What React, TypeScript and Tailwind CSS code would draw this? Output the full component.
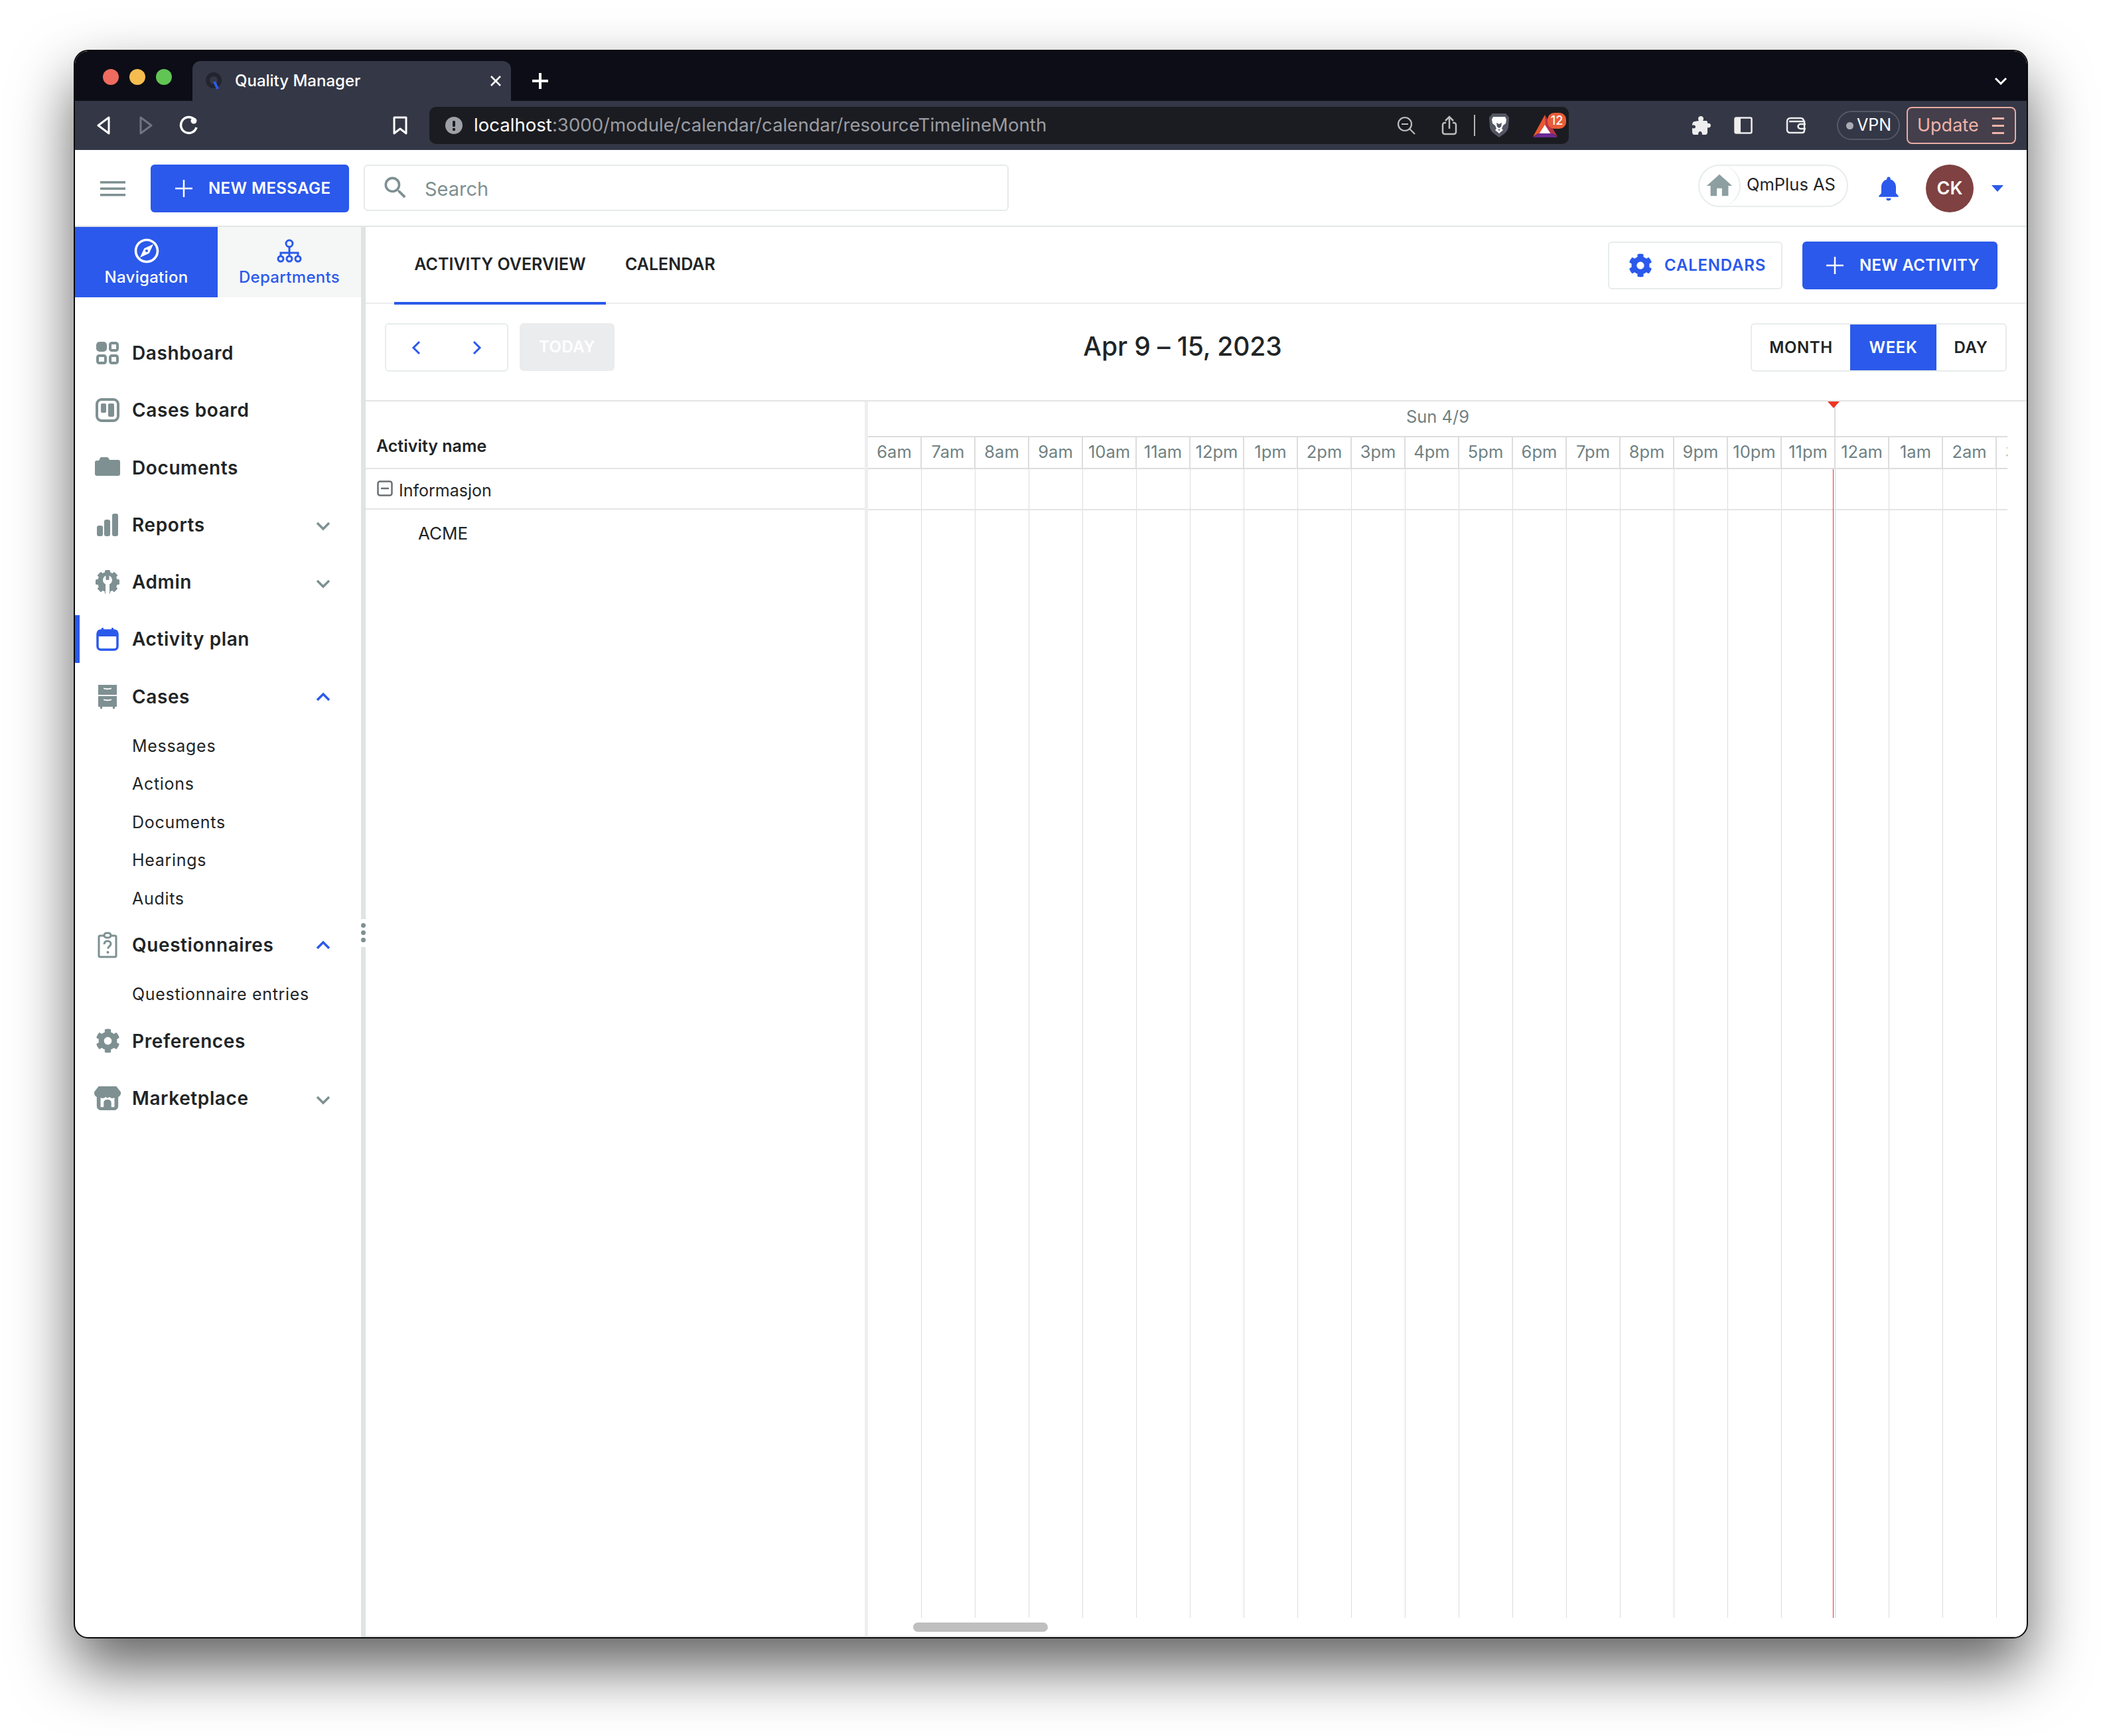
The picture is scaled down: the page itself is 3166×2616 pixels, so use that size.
import { ReactNode } from 'react';
import { FaCog } from 'react-icons/fa';
import { MdHome, MdNotifications, MdOutlineExplore, MdSearch } from 'react-icons/md';

const hours = ['6am', '7am', '8am', '9am', '10am', '11am', '12pm', '1pm', '2pm', '3pm', '4pm', '5pm', '6pm', '7pm', '8pm', '9pm', '10pm', '11pm', '12am', '1am', '2am', '3am'];

const Chevron = ({ up }: { up?: boolean }) => (
  <svg width="22" height="14" viewBox="0 0 22 14" fill="none" className={up ? 'text-[#2b59eb]' : 'text-[#7e9092] mt-[5px]'}>
    <path d={up ? 'M2 12l9-9 9 9' : 'M2 2l9 9 9-9'} stroke="currentColor" strokeWidth="3.500" />
  </svg>
);

const DashIcon = () => (
  <svg width="34" height="34" viewBox="0 0 34 34" fill="none" stroke="#7e9092" strokeWidth="4">
    <rect x="2" y="2" width="12" height="11" rx="3" fill="#7e9092" />
    <rect x="21" y="2" width="11" height="11" rx="2.500" />
    <rect x="2" y="21" width="12" height="11" rx="2.500" />
    <rect x="21" y="21" width="11" height="11" rx="2.500" />
  </svg>
);

const BoardIcon = () => (
  <svg width="36" height="36" viewBox="0 0 36 36" fill="none">
    <rect x="2" y="2" width="32" height="32" rx="7" stroke="#7e9092" strokeWidth="4" />
    <rect x="8" y="8" width="8" height="14" rx="2" fill="#7e9092" />
    <rect x="19" y="8" width="9" height="20" rx="2" fill="#7e9092" />
  </svg>
);

const FolderIcon = () => (
  <svg width="38" height="32" viewBox="0 0 38 32" fill="#7e9092">
    <path d="M0 8c0-2 1-3 3-3h3l2-4c.4-.7 1-1 2-1h8c1.500 0 2.500.7 3 2l1 2h13c2 0 3 1 3 3v18c0 2-1 3-3 3H3c-2 0-3-1-3-3z" />
  </svg>
);

const BarsIcon = () => (
  <svg width="32" height="34" viewBox="0 0 32 34" fill="#7e9092">
    <rect x="0" y="18" width="9" height="16" rx="3" />
    <rect x="11" y="9" width="9" height="25" rx="3" />
    <rect x="23" y="0" width="9" height="34" rx="3" />
  </svg>
);

const AdminIcon = () => (
  <svg width="38" height="36" viewBox="0 0 38 36" fill="#7e9092">
    <circle cx="19" cy="18" r="15" />
    {[0, 45, 90, 135, 180, 225, 270, 315].map((a) => (
      <rect key={a} x="15" y="0" width="8" height="8" rx="1.500" transform={`rotate(${a} 19 18)`} />
    ))}
    <circle cx="19" cy="15" r="7" fill="#fff" />
    <rect x="16.500" y="6" width="5" height="9" rx="1" />
    <rect x="16" y="19" width="6" height="17" fill="#fff" />
  </svg>
);

const CalIcon = () => (
  <svg width="34" height="36" viewBox="0 0 34 36" fill="none">
    <rect x="2" y="5" width="30" height="29" rx="5" stroke="#2b59eb" strokeWidth="3.500" />
    <rect x="2" y="5" width="30" height="9" fill="#2b59eb" />
    <rect x="8" y="1" width="3" height="6" rx="1" fill="#2b59eb" />
    <rect x="23" y="1" width="3" height="6" rx="1" fill="#2b59eb" />
  </svg>
);

const CabinetIcon = () => (
  <svg width="30" height="36" viewBox="0 0 30 36" fill="#7e9092">
    <path d="M1 0h28v15H1zM9 6c3 1.500 9 1.500 12 0v-1.500c-3 1-9 1-12 0z" fillRule="evenodd" />
    <path d="M1 17h28v16h-3v3h-3v-3H7v3H4v-3H1zM9 23c3 1.500 9 1.500 12 0v-1.500c-3 1-9 1-12 0z" fillRule="evenodd" />
  </svg>
);

const ClipIcon = () => (
  <svg width="30" height="40" viewBox="0 0 30 40" fill="none">
    <rect x="2" y="6" width="26" height="32" rx="2" stroke="#7e9092" strokeWidth="3" />
    <rect x="10" y="2" width="10" height="7" rx="3.500" stroke="#7e9092" strokeWidth="3" fill="#fff" />
    <path d="M10 19c0-3 2-5 5-5s5 2 5 4.500c0 3-4 3.500-4.500 7" stroke="#7e9092" strokeWidth="3" />
    <circle cx="15.500" cy="31" r="2" fill="#7e9092" />
  </svg>
);

const StoreIcon = () => (
  <svg width="42" height="38" viewBox="0 0 42 38" fill="#7e9092">
    <path d="M7 0h28l7 9v2c0 3-2 5-4 6H4c-2-1-4-3-4-6V9z" />
    <path d="M4 14h34v17c0 4-3 7-7 7H11c-4 0-7-3-7-7z" />
    <path d="M10 18c3 2 6 1 8-1 2 2 4 2 6 0 2 2 5 3 8 1v15h-5v-7c0-3-2-5-6-5s-6 2-6 5v7h-5z" fill="#fff" />
  </svg>
);

type NavItem = { label: string; icon: ReactNode; chevron?: 'up' | 'down'; active?: boolean; subs?: string[] };

const nav: NavItem[] = [
  { label: 'Dashboard', icon: <DashIcon /> },
  { label: 'Cases board', icon: <BoardIcon /> },
  { label: 'Documents', icon: <FolderIcon /> },
  { label: 'Reports', icon: <BarsIcon />, chevron: 'down' },
  { label: 'Admin', icon: <AdminIcon />, chevron: 'down' },
  { label: 'Activity plan', icon: <CalIcon />, active: true },
  { label: 'Cases', icon: <CabinetIcon />, chevron: 'up', subs: ['Messages', 'Actions', 'Documents', 'Hearings', 'Audits'] },
  { label: 'Questionnaires', icon: <ClipIcon />, chevron: 'up', subs: ['Questionnaire entries'] },
  { label: 'Preferences', icon: <FaCog size={37} color="#7e9092" /> },
  { label: 'Marketplace', icon: <StoreIcon />, chevron: 'down' },
];

function BrowserChrome() {
  return (
    <>
      {/* Tab strip */}
      <div className="h-[75px] bg-[#0c0d16] flex items-end shrink-0">
        <div className="flex items-center gap-[16px] pl-[42px] w-[177px] h-full pt-[2px]">
          <div className="w-[24px] h-[24px] rounded-full bg-[#ef6a5f] shrink-0" />
          <div className="w-[24px] h-[24px] rounded-full bg-[#f5bd4f] shrink-0" />
          <div className="w-[24px] h-[24px] rounded-full bg-[#61c554] shrink-0" />
        </div>
        <div className="w-[480px] h-[60px] bg-[#343746] rounded-t-[12px] flex items-center pl-[20px] pr-[14px]">
          <svg width="24" height="26" viewBox="0 0 24 26" fill="none">
            <circle cx="12" cy="12" r="9" stroke="#22242e" strokeWidth="6" />
            <path d="M13 14l5 11" stroke="#2b59eb" strokeWidth="4" />
          </svg>
          <span className="ml-[20px] text-[24px] font-medium text-white">Quality Manager</span>
          <svg width="18" height="18" viewBox="0 0 18 18" className="ml-auto" stroke="#fff" strokeWidth="2.500">
            <path d="M2 2l14 14M16 2L2 16" />
          </svg>
        </div>
        <svg width="26" height="26" viewBox="0 0 26 26" className="ml-[31px] mb-[17px]" stroke="#fff" strokeWidth="4">
          <path d="M13 1v24M1 13h24" />
        </svg>
        <svg width="20" height="12" viewBox="0 0 20 12" fill="none" stroke="#fff" strokeWidth="3" className="ml-auto mr-[29px] mb-[24px]">
          <path d="M2 2l8 8 8-8" />
        </svg>
      </div>
      {/* Toolbar */}
      <div className="h-[74px] bg-[#343746] flex items-center shrink-0">
        <svg width="22" height="28" viewBox="0 0 22 28" fill="none" stroke="#fff" strokeWidth="3" className="ml-[32px]">
          <path d="M19 2L3 14l16 12z" strokeLinejoin="round" />
        </svg>
        <svg width="22" height="28" viewBox="0 0 22 28" fill="none" stroke="#71747f" strokeWidth="3" className="ml-[42px]">
          <path d="M3 2l16 12L3 26z" strokeLinejoin="round" />
        </svg>
        <svg width="30" height="30" viewBox="0 0 30 30" fill="none" className="ml-[39px]">
          <path d="M23 6a12 12 0 1 0 3 12" stroke="#fff" strokeWidth="3.500" />
          <circle cx="22" cy="8" r="4.500" fill="#fff" />
        </svg>
        <svg width="22" height="28" viewBox="0 0 22 28" fill="none" stroke="#fff" strokeWidth="3" className="ml-[292px]">
          <path d="M2 2h18v24l-9-7-9 7z" strokeLinejoin="round" />
        </svg>
        <div className="ml-[33px] w-[1717px] h-[56px] bg-[#1b1c21] rounded-[10px] flex items-center pl-[24px] pr-[17px]">
          <svg width="26" height="26" viewBox="0 0 26 26">
            <circle cx="13" cy="13" r="13" fill="#9da0a6" />
            <rect x="11" y="6" width="4" height="9" rx="1.500" fill="#1b1c21" />
            <circle cx="13" cy="19" r="2.200" fill="#1b1c21" />
          </svg>
          <span className="ml-[17px] text-[27.600px] text-[#9a9ca3]">
            <span className="text-white">localhost</span>:3000/module/calendar/calendar/resourceTimelineMonth
          </span>
          <div className="ml-auto flex items-center">
            {/* Zoom out */}
            <svg width="28" height="28" viewBox="0 0 28 28" fill="none" stroke="#bdbdbd" strokeWidth="2.200">
              <circle cx="12" cy="12" r="10" />
              <path d="M7 12h10" />
              <path d="M19 19l8 8" />
            </svg>
            {/* Share */}
            <svg width="24" height="30" viewBox="0 0 24 30" fill="none" stroke="#bdbdbd" strokeWidth="2.500" className="ml-[39px]">
              <path d="M7 11H5a3 3 0 0 0-3 3v11a3 3 0 0 0 3 3h14a3 3 0 0 0 3-3V14a3 3 0 0 0-3-3h-2" />
              <path d="M12 20V2M6 8l6-6 6 6" />
            </svg>
            <div className="ml-[25px] w-[2px] h-[32px] bg-[#b5b5b5]" />
            {/* Brave */}
            <svg width="32" height="36" viewBox="0 0 32 36" className="ml-[20px]">
              <path d="M6 0h20l5 6-1 15c-1 4-3 7-7 10l-7 5-7-5c-4-3-6-6-7-10L1 6z" fill="#545663" />
              <path d="M7 5h18l2 4-1 6-4 3-2 5 2 2-6 5-6-5 2-2-2-5-4-3-1-6z" fill="#fff" />
              <path d="M12 14l4 2 4-2-1 6-3 2-3-2zM14 24h4l-2 2z" fill="#545663" />
            </svg>
            {/* BAT rewards */}
            <div className="relative ml-[35px] w-[37px] h-[34px] mb-[-1px]">
              <svg width="37" height="34" viewBox="0 0 37 34">
                <path d="M18 0L0 33l8-5h14z" fill="#e9572e" />
                <path d="M18 0l19 33-8-5H20z" fill="#b8324a" />
                <path d="M18 15l9 14H9z" fill="#fff" />
                <path d="M0 34l8-6h21l8 6z" fill="#6c2b94" />
              </svg>
              <div className="absolute left-[22px] top-[-3px] w-[28px] h-[24px] rounded-[10px] bg-[#ea5c38] text-[18px] font-medium text-white flex items-center justify-center">12</div>
            </div>
          </div>
        </div>
        {/* Extensions */}
        <svg width="30" height="30" viewBox="0 0 30 30" fill="#eeeeee" className="ml-[185px]">
          <path d="M11 8c-2-3-1-7 3-7s5 4 3 7h5c2 0 2 2 2 4 2-1 5 0 5 3s-3 4-5 3v7c0 2-1 4-3 4h-5c0-3-1-5-3-5s-3 2-3 5H4c-2 0-3-2-3-4v-6c3 1 5 0 5-2s-2-3-5-2c0-3 1-6 4-6z" />
        </svg>
        <svg width="28" height="26" viewBox="0 0 28 26" fill="none" className="ml-[34px]">
          <rect x="1.500" y="1.500" width="25" height="23" rx="2" stroke="#eeeeee" strokeWidth="2.500" />
          <rect x="2" y="2" width="8" height="22" fill="#eeeeee" />
        </svg>
        <svg width="32" height="26" viewBox="0 0 32 26" fill="none" stroke="#eeeeee" strokeWidth="2.500" className="ml-[50px]">
          <path d="M2 7c0-3 2-5 5-5h16c2 0 4 2 4 4v1" />
          <path d="M2 7v13c0 2 2 4 4 4h19c2 0 3-2 3-4V7H5" />
          <path d="M30 11h-8a3.500 3.500 0 0 0 0 7h8" />
        </svg>
        <div className="ml-[45px] w-[95px] h-[44px] rounded-full border-2 border-[#555866] flex items-center pl-[12px]">
          <span className="w-[11px] h-[11px] rounded-full bg-[#a9abb5]" />
          <span className="ml-[5px] text-[25px] text-white">VPN</span>
        </div>
        <div className="ml-[10px] w-[165px] h-[56px] rounded-[8px] border-2 border-[#e8aca4] bg-[#443f4b] flex items-center pl-[14px]">
          <span className="text-[27px] text-[#efb3aa]">Update</span>
          <div className="ml-auto mr-[16px] flex flex-col gap-[8px]">
            <span className="w-[18px] h-[3px] bg-[#efb3aa]" />
            <span className="w-[18px] h-[3px] bg-[#efb3aa]" />
            <span className="w-[18px] h-[3px] bg-[#efb3aa]" />
          </div>
        </div>
      </div>
    </>
  );
}

function AppHeader() {
  return (
    <div className="h-[116px] border-b-2 border-[#e1e6e6] flex items-center shrink-0 pt-[2px]">
      <svg width="38" height="24" viewBox="0 0 38 24" fill="#7e9092" className="ml-[38px]">
        <rect y="1" width="38" height="3.500" />
        <rect y="10.500" width="38" height="3.500" />
        <rect y="20" width="38" height="3.500" />
      </svg>
      <button className="ml-[38px] w-[299px] h-[72px] rounded-[6px] bg-[#2b59eb] text-white flex items-center pl-[37px]">
        <svg width="26" height="26" viewBox="0 0 26 26" stroke="#fff" strokeWidth="2.500">
          <path d="M13 0v26M0 13h26" />
        </svg>
        <span className="ml-[24px] text-[24px] font-semibold tracking-[0.4px]">NEW MESSAGE</span>
      </button>
      <div className="ml-[22px] w-[972px] h-[70px] rounded-[6px] border-2 border-[#e6eaea] flex items-center pl-[30px] mt-[-2px]">
        <MdSearch size={44} color="#7e9092" className="ml-[-6px]" />
        <span className="ml-[22px] pt-[3px] text-[29px] text-[#7e9092]">Search</span>
      </div>
      <div className="ml-auto h-[64px] w-[226px] rounded-full border-2 border-[#e8ecec] flex items-center mt-[-8px]">
        <div className="w-[62px] h-[62px] rounded-full border-r-2 border-[#e8ecec] flex items-center justify-center shrink-0">
          <MdHome size={46} color="#8d9fa0" />
        </div>
        <span className="ml-[9px] mb-[4px] text-[25.500px] text-[#1f2527]">QmPlus AS</span>
      </div>
      <MdNotifications size={44} color="#2b59eb" className="ml-[39px]" />
      <div className="ml-[34px] w-[72px] h-[72px] rounded-full bg-[#7f4141] text-white text-[27px] font-semibold flex items-center justify-center">CK</div>
      <svg width="18" height="10" viewBox="0 0 18 10" fill="#2b59eb" className="ml-[27px] mr-[35px]">
        <path d="M0 0h18L9 10z" />
      </svg>
    </div>
  );
}

function Sidebar() {
  return (
    <aside className="w-[431px] shrink-0 flex flex-col">
      <div className="flex h-[106px] shrink-0">
        <div className="w-[215px] bg-[#2b59eb] text-white flex flex-col items-center pt-[14px]">
          <MdOutlineExplore size={44} />
          <span className="text-[24px] font-medium tracking-[0.3px]">Navigation</span>
        </div>
        <div className="w-[216px] bg-[#f5f7f7] text-[#2b59eb] flex flex-col items-center pt-[18px]">
          <svg width="38" height="36" viewBox="0 0 38 36" fill="none" stroke="#2b59eb" strokeWidth="3">
            <circle cx="19" cy="7" r="5" />
            <path d="M19 12v10M6 26v-5h26v5M19 21v5" />
            <circle cx="6" cy="30" r="4" />
            <circle cx="19" cy="30" r="4" />
            <circle cx="32" cy="30" r="4" />
          </svg>
          <span className="mt-[4px] text-[24px] font-medium tracking-[0.3px]">Departments</span>
        </div>
      </div>
      <nav className="pt-[48px] flex flex-col">
        {nav.map((item) => (
          <div key={item.label} className={item.subs ? 'mb-[5px]' : 'mb-[14.300px]'}>
            <div className={`h-[72px] flex items-center border-l-[7px] pl-[22px] pr-[46px] ${item.active ? 'border-[#2b59eb]' : 'border-transparent'}`}>
              <div className="w-[40px] flex justify-center shrink-0">{item.icon}</div>
              <span className="ml-[17px] text-[28px] font-semibold tracking-[0.6px] text-[#1f2527]">{item.label}</span>
              {item.chevron && (
                <span className="ml-auto">
                  <Chevron up={item.chevron === 'up'} />
                </span>
              )}
            </div>
            {item.subs && (
              <div className="flex flex-col pt-[10px]">
                {item.subs.map((s) => (
                  <div key={s} className="h-[57.500px] flex items-center pl-[86px] text-[25px] tracking-[0.7px] text-[#1f2527]">
                    {s}
                  </div>
                ))}
              </div>
            )}
          </div>
        ))}
      </nav>
    </aside>
  );
}

function Timeline() {
  return (
    <div className="flex flex-1 border-t-2 border-[#e4e4e4] min-h-0">
      <div className="w-[752px] shrink-0">
        <div className="h-[102px] border-b-2 border-[#e4e4e4] flex items-center pl-[16px] pt-[36px] text-[25px] font-semibold text-[#1f2527]">Activity name</div>
        <div className="h-[61px] border-b-2 border-[#e4e4e4] flex items-center pl-[17px] pt-[6px]">
          <svg width="24" height="24" viewBox="0 0 24 24" fill="none" stroke="#6b6f72" strokeWidth="2.500" className="mt-[-8px]">
            <rect x="1.500" y="1.500" width="21" height="21" rx="3" />
            <path d="M6 12h12" />
          </svg>
          <span className="ml-[9px] text-[25px] text-[#1f2527]">Informasjon</span>
        </div>
        <div className="pl-[79px] pt-[16px] text-[26px] text-[#1f2527]">ACME</div>
      </div>
      <div className="w-[5px] shrink-0 bg-[#eeeeee]" />
      <div className="flex-1 relative flex flex-col">
        <div className="w-[1717px] h-[52px] relative flex items-center justify-center pb-[6px] text-[25.500px] text-[#6f8182]">
          Sun 4/9
          <div className="absolute left-[1456px] top-0 bottom-0 w-[2px] bg-[#dddddd]" />
        </div>
        <div className="w-[1717px] h-[50px] flex overflow-hidden border-y-2 border-[#dddddd] shrink-0">
          {hours.map((h) => (
            <div key={h} className="w-[81px] shrink-0 border-r-2 border-[#dddddd] flex items-center justify-center pb-[2px] text-[25.500px] text-[#6f8182]">
              {h}
            </div>
          ))}
        </div>
        {/* Grid lines under the hour row */}
        <div className="w-[1717px] h-[1731px] flex overflow-hidden relative">
          {hours.map((h) => (
            <div key={h} className="w-[81px] h-full shrink-0 border-r-[1px] border-[#dcdcdc]" />
          ))}
          <div className="absolute left-0 right-0 top-[60px] h-[2px] bg-[#e4e4e4]" />
          <div className="absolute left-[1454px] top-0 bottom-0 w-[1px] bg-[#e2372a]" />
        </div>
        <svg width="18" height="10" viewBox="0 0 18 10" className="absolute left-[1446px] top-0">
          <path d="M0 0h18L9 10z" fill="#ee3524" />
        </svg>
        <div className="absolute left-[68px] bottom-[6px] w-[203px] h-[14px] rounded-full bg-[#bfbfbf]" />
      </div>
    </div>
  );
}

function Content() {
  return (
    <main className="flex-1 min-w-0 flex flex-col border-b-2 border-[#e8e8e8]">
      {/* Tabs */}
      <div className="h-[116px] shrink-0 border-b-2 border-[#ececec] flex">
        <div className="ml-[43px] w-[319px] border-b-4 border-[#2b59eb] h-[117px] flex items-center justify-center text-[25px] font-semibold text-[#1f2527]">ACTIVITY OVERVIEW</div>
        <div className="ml-[29px] h-[116px] flex items-center pb-[2px] text-[25px] font-semibold text-[#1f2527]">CALENDAR</div>
        <div className="ml-auto mr-[44px] flex items-start gap-[30px] pt-[22px]">
          <button className="w-[263px] h-[72px] rounded-[6px] border-2 border-[#e8ecec] flex items-center pl-[29px] text-[#2b59eb]">
            <FaCog size={36} />
            <span className="ml-[18px] text-[24px] font-semibold tracking-[0.8px]">CALENDARS</span>
          </button>
          <button className="w-[294px] h-[72px] rounded-[6px] bg-[#2b59eb] text-white flex items-center pl-[36px]">
            <svg width="26" height="26" viewBox="0 0 26 26" stroke="#fff" strokeWidth="2.500">
              <path d="M13 0v26M0 13h26" />
            </svg>
            <span className="ml-[24px] text-[24px] font-semibold tracking-[0.3px]">NEW ACTIVITY</span>
          </button>
        </div>
      </div>
      {/* Calendar toolbar */}
      <div className="h-[145px] shrink-0 flex justify-between items-start pl-[29px] pr-[30px] pt-[29px]">
        <div className="flex gap-[17px]">
          <div className="w-[186px] h-[73px] rounded-[6px] border-2 border-[#e8ecec] flex items-center justify-between px-[38px]">
            <svg width="14" height="22" viewBox="0 0 14 22" fill="none" stroke="#2b59eb" strokeWidth="3">
              <path d="M12 2L3 11l9 9" />
            </svg>
            <svg width="14" height="22" viewBox="0 0 14 22" fill="none" stroke="#2b59eb" strokeWidth="3">
              <path d="M2 2l9 9-9 9" />
            </svg>
          </div>
          <div className="w-[143px] h-[72px] rounded-[6px] bg-[#ebecee] text-white text-[24px] font-semibold tracking-[0.5px] flex items-center justify-center">TODAY</div>
        </div>
        <div className="text-[39px] font-medium tracking-[-0.1px] text-[#1f2527] leading-[70px]">Apr 9 – 15, 2023</div>
        <div className="w-[386px] h-[73px] rounded-[6px] border-2 border-[#e8ecec] flex overflow-hidden text-[24px] font-semibold tracking-[0.6px] text-[#1f2527]">
          <div className="w-[148px] flex items-center justify-center">MONTH</div>
          <div className="w-[130px] bg-[#2b59eb] text-white flex items-center justify-center">WEEK</div>
          <div className="flex-1 flex items-center justify-center">DAY</div>
        </div>
      </div>
      <Timeline />
    </main>
  );
}

export default function App() {
  return (
    <div className="w-[3166px] h-[2616px] bg-white pt-[75px] pl-[111px] overflow-hidden font-['Inter',sans-serif]">
      <div className="w-[2945px] h-[2394px] rounded-[22px] border-2 border-[#0a0a0a] bg-white overflow-hidden flex flex-col shadow-[0_44px_90px_rgba(0,0,0,0.62)]">
        <BrowserChrome />
        <AppHeader />
        <div className="flex flex-1 min-h-0">
          <Sidebar />
          <div className="w-[7px] shrink-0 bg-[#dfe3e3] flex flex-col justify-center">
            <div className="h-[42px] bg-white flex flex-col items-center justify-center gap-[4px] mb-[-2px]">
              <span className="w-[7px] h-[7px] rounded-full bg-[#7e9092]" />
              <span className="w-[7px] h-[7px] rounded-full bg-[#7e9092]" />
              <span className="w-[7px] h-[7px] rounded-full bg-[#7e9092]" />
            </div>
          </div>
          <Content />
        </div>
      </div>
    </div>
  );
}
